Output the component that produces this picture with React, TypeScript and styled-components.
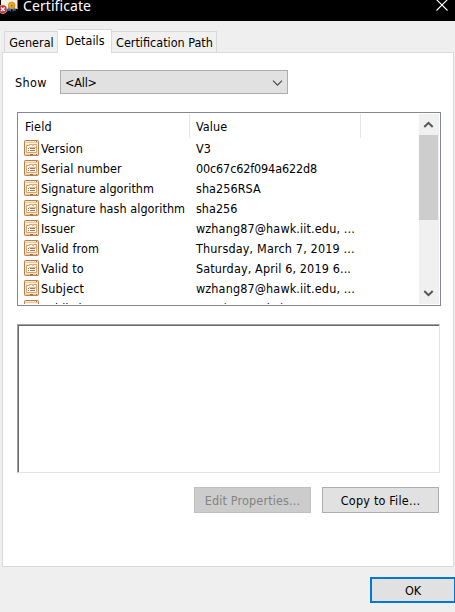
import React from 'react';
import styled, { createGlobalStyle } from 'styled-components';

const GlobalStyle = createGlobalStyle`
  *, *::before, *::after { box-sizing: border-box; }
  html, body { margin: 0; padding: 0; overflow: hidden; background: #efefef; }
  body { font: 12.5px/16px "DejaVu Sans Condensed", Tahoma, "DejaVu Sans", sans-serif; color: #000; }
  button { font: inherit; color: inherit; margin: 0; padding: 0; }
`;

const Window = styled.div`
  width: 455px;
  height: 612px;
  display: flex;
  flex-direction: column;
  overflow: hidden;
  background: #efefef;
`;

const Text = styled.span<{ $spacing?: number }>`
  letter-spacing: ${(p) => p.$spacing ?? 0}px;
  white-space: pre;
`;

const TitleBar = styled.header`
  flex: 0 0 21px;
  display: flex;
  background: #000;
  color: #fff;
`;

const Title = styled.h1`
  flex: 1;
  margin: 0 0 0 5px;
  font: 400 14px/12px "Noto Sans", "Segoe UI", sans-serif;
  letter-spacing: 0.08px;
`;

const CloseButton = styled.button`
  width: 19px;
  height: 21px;
  border: 0;
  background: none;
  display: flex;
`;

const TabStrip = styled.nav`
  flex: 0 0 32px;
  display: flex;
  align-items: flex-end;
  padding: 0 0 0 4px;
  position: relative;
  z-index: 1;
`;

const Tab = styled.div<{ $width: number; $active?: boolean }>`
  width: ${(p) => p.$width}px;
  height: ${(p) => (p.$active ? 24 : 21)}px;
  margin-bottom: ${(p) => (p.$active ? 0 : 1)}px;
  padding: 3px 0 0 1px;
  border: 1px solid #d9d9d9;
  border-bottom: 0;
  background: ${(p) => (p.$active ? '#fff' : '#f0f0f0')};
  text-align: center;

  & + & { border-left-width: ${(p) => (p.$active ? 1 : 0)}px; }
`;

const Page = styled.main`
  width: 452px;
  height: 515px;
  margin: -1px 0 0 2px;
  padding: 17px 13px 0 14px;
  border: 1px solid #d9d9d9;
  background: #fff;
`;

const ShowRow = styled.div`
  display: flex;
  align-items: center;
  height: 24px;
  margin-left: -2px;
`;

const ShowLabel = styled.label`
  width: 45px;
  padding-top: 2px;
`;

const Combo = styled.div`
  width: 228px;
  height: 24px;
  display: flex;
  align-items: center;
  justify-content: space-between;
  padding: 2px 4px 0;
  border: 1px solid #adadad;
  background: #e1e1e1;
`;

const ListBox = styled.section`
  width: 424px;
  height: 194px;
  margin-top: 18px;
  padding: 1px 1px 1px 0;
  border: 1px solid #828790;
  display: flex;
`;

const ListBody = styled.div`
  flex: 1;
  height: 190px;
  overflow: hidden;
`;

const HeaderRow = styled.div`
  display: flex;
  height: 24px;
`;

const HeaderCell = styled.div<{ $width: number }>`
  width: ${(p) => p.$width}px;
  padding: 5px 0 0 7px;
  border-right: 1px solid #e5e5e5;

  & + & { padding-left: 6px; }
`;

const Row = styled.div`
  display: flex;
  height: 20px;
  padding: 2px 0 0 6px;

  ${Text} { margin-top: 1px; }
`;

const FieldCell = styled.div`
  width: 172px;
  display: flex;
  gap: 2px;
`;

const ScrollBar = styled.div`
  width: 20px;
  height: 190px;
  display: flex;
  flex-direction: column;
  background: #f0f0f0;
`;

const ScrollArrow = styled.button`
  height: 21px;
  width: 20px;
  border: 0;
  background: none;
  display: flex;
`;

const Thumb = styled.div`
  width: 19px;
  height: 85px;
  margin-bottom: auto;
  background: #cdcdcd;
`;

const Detail = styled.div`
  width: 423px;
  height: 149px;
  margin-top: 18px;
  border: 1px solid;
  border-color: #a0a0a0 #e3e3e3 #e3e3e3 #a0a0a0;

  &::before {
    content: "";
    display: block;
    height: 147px;
    border-top: 1px solid #696969;
    border-left: 1px solid #696969;
  }
`;

const Actions = styled.div`
  display: flex;
  justify-content: flex-end;
  gap: 11px;
  padding: 14px 1px 0 0;
`;

const Button = styled.button`
  width: 117px;
  height: 26px;
  border: 1px solid #adadad;
  background: #e1e1e1;
  padding-top: 2px;

  &:disabled {
    border-color: #bfbfbf;
    background: #cccccc;
    color: #838383;
  }
`;

const Footer = styled.footer`
  display: flex;
  padding: 10px 0 0 370px;
`;

const OkButton = styled(Button)`
  flex: 0 0 86px;
  border: 2px solid #0078d7;
`;

const CertificateIcon = () => (
  <svg width="18" height="16" viewBox="0 0 18 16">
    <path d="M1 0H17.5V9H1Z" fill="#f5f0e4" />
    <path d="M1 8.5H17.5" stroke="#c6c0b5" />
    <path d="M8.5 7L7.5 11.5L9.8 10.4L11 12V7ZM12 7L13 12L14 10.4L16 11L14.5 7Z" fill="#3569c0" />
    <circle cx="11.7" cy="5.5" r="3.7" fill="#d8950f" />
    <circle cx="11.5" cy="5.2" r="2.2" fill="#efba42" />
    <circle cx="11.7" cy="5.6" r="1.1" fill="#a86808" />
    <circle cx="2.8" cy="9.2" r="4.6" fill="#d8d0d0" />
    <circle cx="2.8" cy="9.2" r="3.9" fill="#c93238" />
    <path d="M1 7.4L4.6 11M4.6 7.4L1 11" stroke="#fff" strokeWidth="1.4" />
  </svg>
);

const FieldIcon = () => (
  <svg width="15" height="16" viewBox="0 0 15 16">
    <rect x=".5" y=".5" width="14" height="15" rx=".8" fill="#fbe5cd" stroke="#b58150" />
    <path d="M1 2.5H14" stroke="#f6c795" />
    <path d="M12 1.5H13" stroke="#a87545" />
    <path d="M1 3.5H14" stroke="#fff3e3" />
    <path d="M2.5 12.5V5.5H5.5V4.5H8.5V5.5H9.5V4.5H12.5V12.5Z" fill="#fff9ef" stroke="#d9a574" />
    <path d="M5 7.5H12" stroke="#e4b88d" />
    <path d="M4 8.5H5M4 10.5H5M6 8.5H11M6 10.5H11" stroke="#9b7755" />
    <path d="M1 14.5H14" stroke="#f1c596" />
    <path d="M6 14.5H9M12 14.5H13" stroke="#9d6c3f" />
  </svg>
);

const fields: [string, number, string, number][] = [
  ['Version', 0.1, 'V3', 0],
  ['Serial number', 0.12, '00c67c62f094a622d8', -0.13],
  ['Signature algorithm', 0.05, 'sha256RSA', 0.05],
  ['Signature hash algorithm', 0.06, 'sha256', 0],
  ['Issuer', 0, 'wzhang87@hawk.iit.edu, ...', 0.13],
  ['Valid from', 0.14, 'Thursday, March 7, 2019 ...', 0.16],
  ['Valid to', 0.1, 'Saturday, April 6, 2019 6...', 0.13],
  ['Subject', 0.15, 'wzhang87@hawk.iit.edu, ...', 0.13],
  ['Public key', 0.1, 'RSA (2048 Bits)', 0],
];

export default function App() {
  return (
    <Window>
      <GlobalStyle />
      <TitleBar>
        <CertificateIcon />
        <Title>Certificate</Title>
        <CloseButton aria-label="Close">
          <svg width="19" height="21" viewBox="0 0 19 21">
            <path d="M0.5 -0.5L11.5 10.5M11.5 -0.5L0.5 10.5" stroke="#fff" strokeWidth="1.1" />
          </svg>
        </CloseButton>
      </TitleBar>
      <TabStrip>
        <Tab $width={54}><Text>General</Text></Tab>
        <Tab $width={54} $active><Text>Details</Text></Tab>
        <Tab $width={105}><Text>Certification Path</Text></Tab>
      </TabStrip>
      <Page>
        <ShowRow>
          <ShowLabel><Text $spacing={0.35}>Show</Text></ShowLabel>
          <Combo>
            <Text $spacing={-0.2}>{'<All>'}</Text>
            <svg width="11" height="6" viewBox="0 0 11 6">
              <path d="M1 .7L5.5 5.2L10 .7" fill="none" stroke="#444" strokeWidth="1.1" />
            </svg>
          </Combo>
        </ShowRow>
        <ListBox>
          <ListBody>
            <HeaderRow>
              <HeaderCell $width={172}><Text $spacing={0.2}>Field</Text></HeaderCell>
              <HeaderCell $width={171}><Text $spacing={0.1}>Value</Text></HeaderCell>
            </HeaderRow>
            {fields.map(([name, nameSpacing, value, valueSpacing]) => (
              <Row key={name}>
                <FieldCell>
                  <FieldIcon />
                  <Text $spacing={nameSpacing}>{name}</Text>
                </FieldCell>
                <Text $spacing={valueSpacing}>{value}</Text>
              </Row>
            ))}
          </ListBody>
          <ScrollBar>
            <ScrollArrow aria-label="Scroll up">
              <svg width="20" height="21" viewBox="0 0 20 21">
                <path d="M5.3 13L9.5 8.8L13.7 13" fill="none" stroke="#555" strokeWidth="2" />
              </svg>
            </ScrollArrow>
            <Thumb />
            <ScrollArrow aria-label="Scroll down">
              <svg width="20" height="21" viewBox="0 0 20 21">
                <path d="M5.3 8L9.5 12.2L13.7 8" fill="none" stroke="#555" strokeWidth="2" />
              </svg>
            </ScrollArrow>
          </ScrollBar>
        </ListBox>
        <Detail />
        <Actions>
          <Button disabled><Text $spacing={0.14}>Edit Properties...</Text></Button>
          <Button><Text $spacing={0.2}>Copy to File...</Text></Button>
        </Actions>
      </Page>
      <Footer>
        <OkButton><Text>OK</Text></OkButton>
      </Footer>
    </Window>
  );
}
